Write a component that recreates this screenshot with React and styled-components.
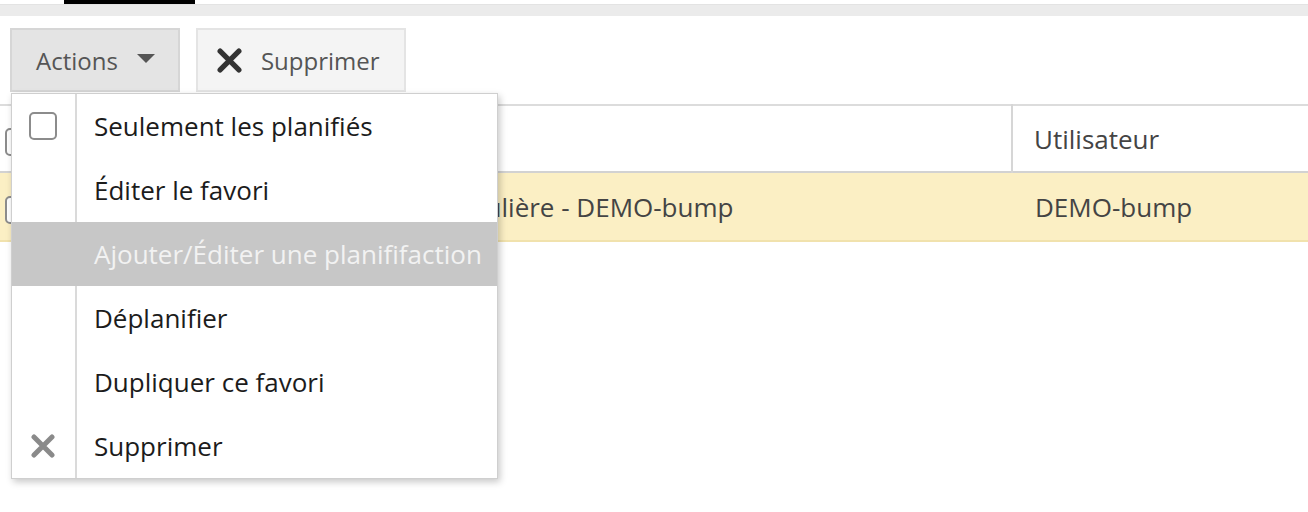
import React from "react";
import styled, { createGlobalStyle } from "styled-components";

const GlobalStyle = createGlobalStyle`
  html, body { margin: 0; padding: 0; background: #fff; }
  body { font-family: "Open Sans", "Noto Sans", sans-serif; }
  * { box-sizing: border-box; }
`;

const Page = styled.div`
  width: 1308px;
  height: 512px;
  overflow: hidden;
  background: #fff;
`;

const TopNav = styled.div`
  height: 4px;
  display: flex;
  padding-left: 64px;
`;

const ActiveTab = styled.div`
  width: 131px;
  height: 4px;
  background: #000;
`;

const SubBar = styled.div`
  height: 12px;
  background: #ebebeb;
  border-top: 1px solid #e3e3e3;
`;

const Toolbar = styled.div`
  display: flex;
  gap: 16px;
  padding: 12px 0 0 10px;
`;

const DropdownWrap = styled.div`
  position: relative;
`;

const ToolButton = styled.button`
  height: 64px;
  display: flex;
  align-items: center;
  gap: ${(p) => p.$gap || 19}px;
  padding: 0 ${(p) => p.$pr || 25}px 0 ${(p) => p.$pl || 25}px;
  border: 2px solid ${(p) => (p.$active ? "#d6d6d6" : "#e4e4e4")};
  background: ${(p) => (p.$active ? "#e4e4e4" : "#f4f4f4")};
  font-family: "Open Sans", "Noto Sans", sans-serif;
  font-size: 24px;
  color: #555;
  cursor: pointer;
`;

const Caret = styled.span`
  width: 0;
  height: 0;
  border-left: 9.5px solid transparent;
  border-right: 9.5px solid transparent;
  border-top: 9px solid #555;
  margin-top: -3px;
`;

const Menu = styled.ul`
  position: absolute;
  top: calc(100% + 1px);
  left: 1px;
  width: 487px;
  margin: 0;
  padding: 0;
  list-style: none;
  background: #fff;
  border: 1px solid #cfcfcf;
  box-shadow: 2px 3px 7px rgba(0, 0, 0, 0.22);
  z-index: 10;
`;

const MenuItem = styled.li`
  display: grid;
  grid-template-columns: 65px 1fr;
  height: 64px;
  background: ${(p) => (p.$hover ? "#c7c7c7" : "#fff")};
  color: ${(p) => (p.$hover ? "#f2f2f2" : "#1c1c1c")};
  font-size: 26px;
`;

const IconCell = styled.span`
  display: flex;
  align-items: center;
  justify-content: center;
  border-right: 2px solid ${(p) => (p.$hover ? "transparent" : "#dadada")};
  padding-right: 2px;
`;

const ItemLabel = styled.span`
  display: flex;
  align-items: center;
  padding-left: 17px;
  white-space: nowrap;
`;

const Check = styled.span`
  width: 28px;
  height: 28px;
  border: 2px solid #8c8c8c;
  border-radius: 5px;
  background: #fff;
`;

const RowCheck = styled(Check)`
  display: inline-block;
  vertical-align: middle;
`;

const Table = styled.table`
  margin-top: 12px;
  width: 1308px;
  border-collapse: collapse;
  font-size: 26px;
  color: #444;
`;

const HeadRow = styled.tr`
  height: 67px;
  border-top: 2px solid #dcdcdc;
  border-bottom: 2px solid #d2d2d2;
  background: #fff;
`;

const BodyRow = styled.tr`
  height: 69px;
  background: #fbefc4;
  border-bottom: 2px solid #f1e2ad;
`;

const Cell = styled.td`
  padding: 0 0 0 ${(p) => p.$pl || 22}px;
  text-align: left;
  font-weight: 400;
  white-space: nowrap;
  width: ${(p) => (p.$w ? `${p.$w}px` : "auto")};
  border-left: ${(p) => (p.$divider ? "2px solid #d6d6d6" : "none")};
`;

const HeadCell = styled(Cell).attrs({ as: "th" })``;

const XIcon = ({ color, size = 24, stroke = 5 }) => (
  <svg width={size} height={size} viewBox="0 0 24 24">
    <path
      d="M3 3 L21 21 M21 3 L3 21"
      stroke={color}
      strokeWidth={stroke}
      strokeLinecap="round"
      fill="none"
    />
  </svg>
);

const items = [
  { label: "Seulement les planifiés", icon: "check" },
  { label: "Éditer le favori" },
  { label: "Ajouter/Éditer une planififaction", hover: true },
  { label: "Déplanifier" },
  { label: "Dupliquer ce favori" },
  { label: "Supprimer", icon: "x" },
];

export default function App() {
  return (
    <Page>
      <GlobalStyle />
      <TopNav>
        <ActiveTab />
      </TopNav>
      <SubBar />
      <Toolbar>
        <DropdownWrap>
          <ToolButton $active $pl={24} $pr={23}>
            Actions
            <Caret />
          </ToolButton>
          <Menu>
            {items.map((it) => (
              <MenuItem key={it.label} $hover={it.hover}>
                <IconCell $hover={it.hover}>
                  {it.icon === "check" && <Check />}
                  {it.icon === "x" && <XIcon color="#8a8a8a" size={24} stroke={5} />}
                </IconCell>
                <ItemLabel>{it.label}</ItemLabel>
              </MenuItem>
            ))}
          </Menu>
        </DropdownWrap>
        <ToolButton $pl={19} $pr={24} $gap={19}>
          <XIcon color="#333" size={25} stroke={5} />
          Supprimer
        </ToolButton>
      </Toolbar>
      <Table>
        <thead>
          <HeadRow>
            <HeadCell $w={62} $pl={5}>
              <RowCheck />
            </HeadCell>
            <HeadCell $w={950} $pl={22}>Nom</HeadCell>
            <HeadCell $divider $pl={21}>Utilisateur</HeadCell>
          </HeadRow>
        </thead>
        <tbody>
          <BodyRow>
            <Cell $pl={5}>
              <RowCheck />
            </Cell>
            <Cell $pl={34}>Extraction de données client régulière - DEMO-bump</Cell>
            <Cell $pl={23}>DEMO-bump</Cell>
          </BodyRow>
        </tbody>
      </Table>
    </Page>
  );
}
